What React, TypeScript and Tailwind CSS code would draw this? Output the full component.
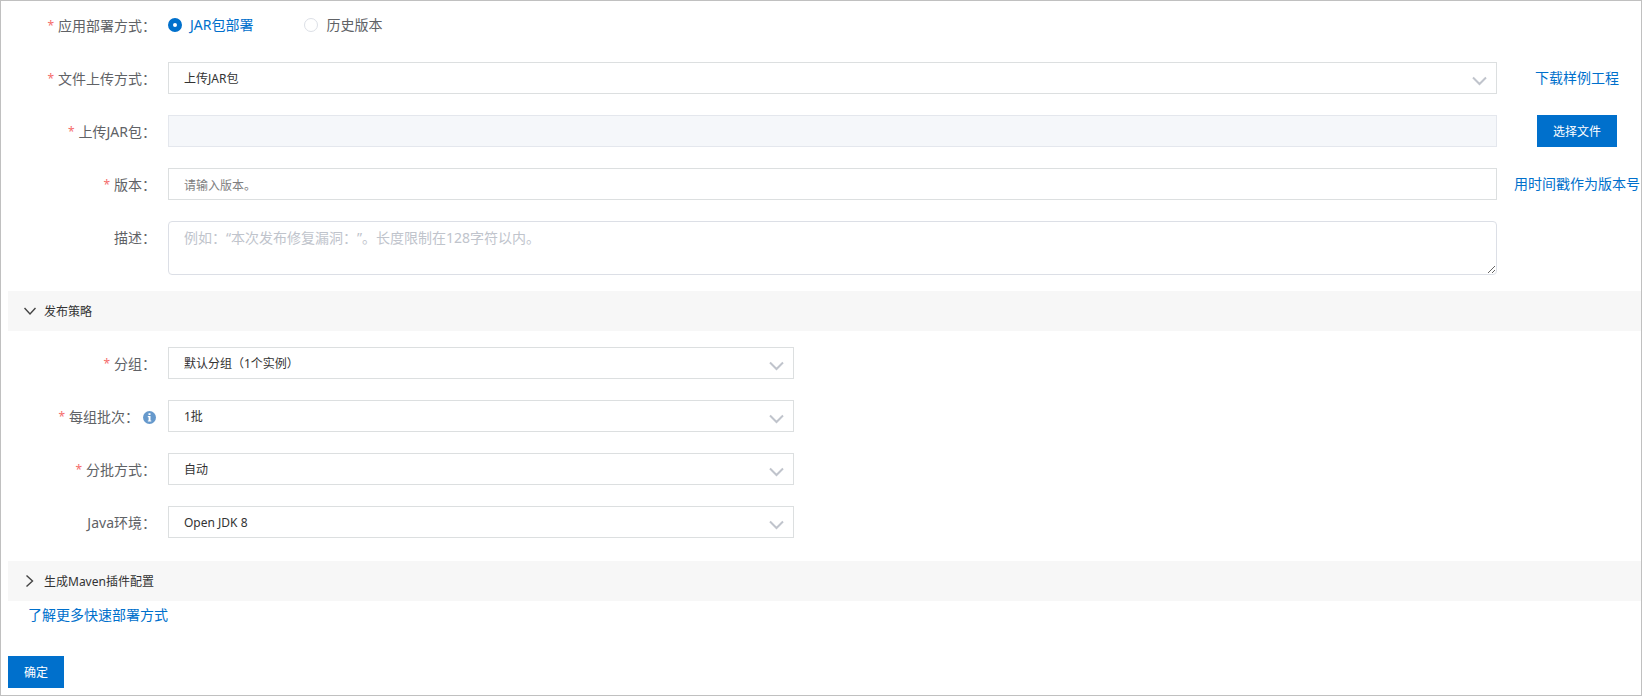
import React, { ReactNode, useState } from "react";

interface RowProps {
    label: string;
    htmlFor?: string;
    required?: boolean;
    info?: boolean;
    side?: ReactNode;
    narrow?: boolean;
    children: ReactNode;
}

function InfoIcon() {
    return (
        <svg className="w-[13px] h-[13px] ml-1 shrink-0" viewBox="0 0 13 13" aria-hidden="true">
            <circle cx="6.5" cy="6.5" r="6.5" fill="#6699cc" />
            <path d="M5.5 2.3h2v1.8h-2zM4.8 5.1h2.7v4.3h.8v1.1H4.8V9.4h.8V6.2h-.8z" fill="#fff" />
        </svg>
    );
}

function FormRow({ label, htmlFor, required, info, side, narrow, children }: RowProps) {
    return (
        <div className="flex items-start">
            <div className="w-40 shrink-0 h-8 pr-3 pt-0.5 flex items-center justify-end text-sm text-[#606266]">
                {required && <span className="mr-1 text-xs text-[#f56c6c]">*</span>}
                <label htmlFor={htmlFor} className="whitespace-nowrap">{label}</label>
                {info && <InfoIcon />}
            </div>
            <div className={narrow ? "flex-1 min-w-0 max-w-[626px]" : "flex-1 min-w-0"}>{children}</div>
            {!narrow && (
                <div className="ml-4 w-32 h-8 shrink-0 flex items-center justify-center text-sm whitespace-nowrap">
                    {side}
                </div>
            )}
        </div>
    );
}

function SelectBox({ id, options }: { id: string; options: string[] }) {
    return (
        <div className="relative">
            <select
                id={id}
                className="block w-full h-8 pt-0.5 pl-[15px] pr-10 appearance-none text-xs text-[#333333] bg-white border border-[#dcdfe0] focus:outline-none focus:border-[#0070cc]"
            >
                {options.map((option) => (
                    <option key={option}>{option}</option>
                ))}
            </select>
            <svg
                className="absolute right-2.5 top-3.5 w-[15px] h-[10px] pointer-events-none"
                viewBox="0 0 15 10"
                fill="none"
                stroke="#c0c4cc"
                strokeWidth="2"
            >
                <path d="M1 1.5l6.5 6.5L14 1.5" />
            </svg>
        </div>
    );
}

function SectionBar({ title, open, onToggle }: { title: string; open: boolean; onToggle: () => void }) {
    return (
        <button
            type="button"
            aria-expanded={open}
            onClick={onToggle}
            className="w-full h-10 pl-4 flex items-center gap-2 text-xs text-[#333333] bg-[#f7f7f7] cursor-pointer"
        >
            <svg className="w-3 h-3" viewBox="0 0 12 12" fill="none" stroke="#444" strokeWidth="1.4">
                {open ? <path d="M.5 3L6 9l5.5-6" /> : <path d="M2.5 .5l6 5.5-6 5.5" />}
            </svg>
            <span className="pt-0.5">{title}</span>
        </button>
    );
}

export default function App() {
    const [mode, setMode] = useState("jar");
    const [strategyOpen, setStrategyOpen] = useState(true);
    const [mavenOpen, setMavenOpen] = useState(false);

    const modes = [
        { value: "jar", label: "JAR包部署" },
        { value: "history", label: "历史版本" },
    ];

    return (
        <form
            className="min-h-screen pl-[7px] pb-[7px] pt-2 bg-white border border-[#c0c0c0] font-['Noto_Sans','Noto_Sans_CJK_SC',sans-serif] [text-spacing-trim:space-all]"
            onSubmit={(e) => e.preventDefault()}
        >
            <div className="flex flex-col gap-[21px]">
                <FormRow label="应用部署方式：" required>
                    <div className="h-8 flex items-center gap-[51px] text-sm">
                        {modes.map((item) => (
                            <label key={item.value} className="flex items-center gap-2 cursor-pointer">
                                <input
                                    type="radio"
                                    name="mode"
                                    checked={mode === item.value}
                                    onChange={() => setMode(item.value)}
                                    className="w-3.5 h-3.5 appearance-none rounded-full bg-white border border-[#dcdfe6] checked:border-5 checked:border-[#0070cc]"
                                />
                                <span className={mode === item.value ? "text-[#0070cc]" : "text-[#606266]"}>
                                    {item.label}
                                </span>
                            </label>
                        ))}
                    </div>
                </FormRow>
                <FormRow
                    label="文件上传方式："
                    htmlFor="uploadType"
                    required
                    side={<a href="#sample" className="text-[#0070cc]">下载样例工程</a>}
                >
                    <SelectBox id="uploadType" options={["上传JAR包", "JAR包地址"]} />
                </FormRow>
                <FormRow
                    label="上传JAR包："
                    htmlFor="jarFile"
                    required
                    side={
                        <button type="button" className="h-8 w-20 pt-0.5 text-xs text-white bg-[#0070cc] cursor-pointer">
                            选择文件
                        </button>
                    }
                >
                    <input
                        id="jarFile"
                        disabled
                        className="block w-full h-8 px-[15px] text-xs bg-[#f5f7fa] border border-[#e4e7ed]"
                    />
                </FormRow>
                <FormRow
                    label="版本："
                    htmlFor="version"
                    required
                    side={<button type="button" className="text-[#0070cc] cursor-pointer">用时间戳作为版本号</button>}
                >
                    <input
                        id="version"
                        placeholder="请输入版本。"
                        className="block w-full h-8 px-[15px] pt-0.5 text-xs text-[#333333] placeholder:text-[#808080] border border-[#dcdfe0] focus:outline-none focus:border-[#0070cc]"
                    />
                </FormRow>
                <FormRow label="描述：" htmlFor="description">
                    <textarea
                        id="description"
                        placeholder="例如：“本次发布修复漏洞：”。长度限制在128字符以内。"
                        className="block w-full h-[54px] px-[15px] py-1.5 text-sm text-[#606266] placeholder:text-[#c0c4cc] border border-[#dcdfe6] rounded resize-y focus:outline-none focus:border-[#0070cc]"
                    />
                </FormRow>
            </div>

            <div className="mt-4">
                <SectionBar title="发布策略" open={strategyOpen} onToggle={() => setStrategyOpen(!strategyOpen)} />
                {strategyOpen && (
                    <div className="pt-4 pb-[23px] flex flex-col gap-[21px]">
                        <FormRow label="分组：" htmlFor="group" required narrow>
                            <SelectBox id="group" options={["默认分组（1个实例）"]} />
                        </FormRow>
                        <FormRow label="每组批次：" htmlFor="batch" required info narrow>
                            <SelectBox id="batch" options={["1批"]} />
                        </FormRow>
                        <FormRow label="分批方式：" htmlFor="batchType" required narrow>
                            <SelectBox id="batchType" options={["自动", "手动"]} />
                        </FormRow>
                        <FormRow label="Java环境：" htmlFor="java" narrow>
                            <SelectBox id="java" options={["Open JDK 8", "Open JDK 7"]} />
                        </FormRow>
                    </div>
                )}
                <SectionBar title="生成Maven插件配置" open={mavenOpen} onToggle={() => setMavenOpen(!mavenOpen)} />
            </div>

            <div className="pl-5 pt-1 text-sm">
                <a href="#more" className="text-[#0070cc]">了解更多快速部署方式</a>
            </div>
            <button type="submit" className="mt-[31px] h-8 px-4 pt-0.5 text-xs text-white bg-[#0070cc] cursor-pointer">
                确定
            </button>
        </form>
    );
}
